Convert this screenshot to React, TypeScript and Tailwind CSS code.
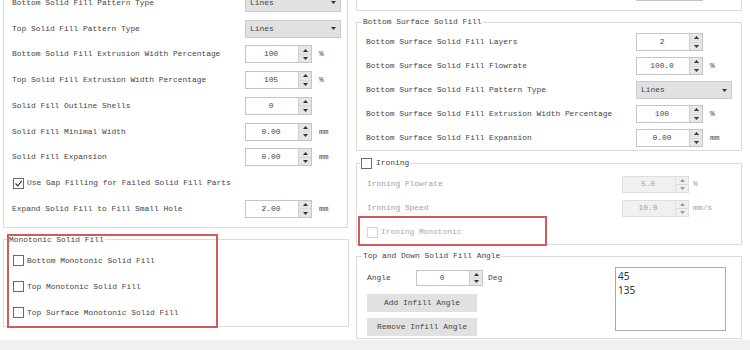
const mono = "[font-family:'Liberation_Mono','Courier_New',monospace] text-[7.9px] leading-[12px]";

const Arrows = ({ disabled }: { disabled?: boolean }) => (
  <div
    className={`flex w-[13px] flex-col border-l ${
      disabled ? 'border-[#e2e2e2] bg-[#f0f0f0]' : 'border-[#cfcfcf] bg-[#e6e6e6]'
    }`}
  >
    <div className="flex flex-1 items-center justify-center border-b border-[#d8d8d8]">
      <svg width="5" height="3" viewBox="0 0 5 3">
        <path d="M0 3 L2.5 0 L5 3 Z" fill={disabled ? '#9a9a9a' : '#333'} />
      </svg>
    </div>
    <div className="flex flex-1 items-center justify-center">
      <svg width="5" height="3" viewBox="0 0 5 3">
        <path d="M0 0 L2.5 3 L5 0 Z" fill={disabled ? '#9a9a9a' : '#333'} />
      </svg>
    </div>
  </div>
);

const Spin = ({ value, disabled, h = 'h-[18px]' }: { value: string; disabled?: boolean; h?: string }) => (
  <div
    className={`flex ${h} w-[67px] border ${
      disabled ? 'border-[#dedede] bg-[#f0f0f0] text-[#a0a0a0]' : 'border-[#c4c4c4] bg-white text-[#444]'
    }`}
  >
    <span className="flex flex-1 items-center justify-center pr-[2px]">{value}</span>
    <Arrows disabled={disabled} />
  </div>
);

const Select = () => (
  <div className="flex h-[18px] w-[96px] items-center justify-between border border-[#cacaca] bg-[#e1e1e1] pl-[4px] pr-[4px] text-[#444]">
    <span>Lines</span>
    <svg width="5" height="3" viewBox="0 0 5 3">
      <path d="M0 0 L2.5 3 L5 0 Z" fill="#333" />
    </svg>
  </div>
);

const Check = ({ checked, disabled }: { checked?: boolean; disabled?: boolean }) => (
  <span
    className={`flex h-[11px] w-[11px] shrink-0 items-center justify-center border bg-white ${
      disabled ? 'border-[#d4d4d4]' : 'border-[#6a6a6a]'
    }`}
  >
    {checked && (
      <svg width="9" height="9" viewBox="0 0 9 9">
        <path d="M1.5 4.5 L3.7 6.8 L7.8 1.8" fill="none" stroke="#333" strokeWidth="1.1" />
      </svg>
    )}
  </span>
);

const Row = ({
  label,
  labelW,
  control,
  unit,
  h,
  disabled,
}: {
  label: string;
  labelW: string;
  control?: React.ReactNode;
  unit?: string;
  h: string;
  disabled?: boolean;
}) => (
  <div className={`flex ${h} items-center`}>
    <span className={`${labelW} shrink-0 ${disabled ? 'text-[#a0a0a0]' : 'text-[#444]'}`}>{label}</span>
    {control}
    {unit && <span className={`${disabled ? 'ml-[4px] text-[#a0a0a0]' : 'ml-[7px] text-[#444]'}`}>{unit}</span>}
  </div>
);

const CheckRow = ({ label, checked, disabled, h }: { label: string; checked?: boolean; disabled?: boolean; h: string }) => (
  <div className={`flex ${h} items-center gap-[3px]`}>
    <Check checked={checked} disabled={disabled} />
    <span className={disabled ? 'text-[#a8a8a8]' : 'text-[#444]'}>{label}</span>
  </div>
);

const Legend = ({ children, ml }: { children: React.ReactNode; ml: string }) => (
  <legend className={`${ml} px-[1px] text-[#444]`}>{children}</legend>
);

export default function App() {
  const lw = 'w-[233px]';
  const rh = 'h-[25.75px]';
  return (
    <div className={`flex h-[350px] w-[750px] flex-col overflow-hidden bg-white ${mono}`}>
      <div className="flex h-[340px]">
        {/* left column */}
        <div className="flex w-[356px] flex-col pl-[3px]">
          <div className="-mt-[10px] w-[345px] border-x border-b border-[#dcdcdc] pb-[5px] pl-[8px]">
            <Row h={rh} labelW={lw} label="Bottom Solid Fill Pattern Type" control={<Select />} />
            <Row h={rh} labelW={lw} label="Top Solid Fill Pattern Type" control={<Select />} />
            <Row h={rh} labelW={lw} label="Bottom Solid Fill Extrusion Width Percentage" control={<Spin value="100" />} unit="%" />
            <Row h={rh} labelW={lw} label="Top Solid Fill Extrusion Width Percentage" control={<Spin value="105" />} unit="%" />
            <Row h={rh} labelW={lw} label="Solid Fill Outline Shells" control={<Spin value="0" />} />
            <Row h={rh} labelW={lw} label="Solid Fill Minimal Width" control={<Spin value="0.00" />} unit="mm" />
            <Row h={rh} labelW={lw} label="Solid Fill Expansion" control={<Spin value="0.00" />} unit="mm" />
            <div className="pl-[1px]">
              <CheckRow h={rh} checked label="Use Gap Filling for Failed Solid Fill Parts" />
            </div>
            <Row h={rh} labelW={lw} label="Expand Solid Fill to Fill Small Hole" control={<Spin value="2.00" />} unit="mm" />
          </div>

          <div className="relative mt-[6px] w-[346px]">
            <fieldset className="border border-[#dcdcdc]">
              <Legend ml="ml-[4px]">Monotonic Solid Fill</Legend>
              <div className="pl-[9px] pt-[2px]">
                <CheckRow h="h-[26px]" label="Bottom Monotonic Solid Fill" />
                <CheckRow h="h-[26px]" label="Top Monotonic Solid Fill" />
                <CheckRow h="h-[26px]" label="Top Surface Monotonic Solid Fill" />
              </div>
            </fieldset>
            <div className="pointer-events-none absolute left-[4px] top-0 h-[94px] w-[211px] border-2 border-[#d45a5a]" />
          </div>
        </div>

        {/* right column */}
        <div className="flex w-[386px] flex-col">
          <div className="h-[11px] overflow-hidden border-x border-b border-[#dcdcdc]">
            <div className="-mt-[17px] ml-[279px]">
              <Spin value="" />
            </div>
          </div>

          <fieldset className="mt-[5px] border border-[#dcdcdc]">
            <Legend ml="ml-[5px]">Bottom Surface Solid Fill</Legend>
            <div className="pl-[9px] pt-[2px]">
              <Row h="h-[24px]" labelW="w-[270px]" label="Bottom Surface Solid Fill Layers" control={<Spin value="2" />} />
              <Row h="h-[24px]" labelW="w-[270px]" label="Bottom Surface Solid Fill Flowrate" control={<Spin value="100.0" />} unit="%" />
              <Row h="h-[24px]" labelW="w-[270px]" label="Bottom Surface Solid Fill Pattern Type" control={<Select />} />
              <Row h="h-[24px]" labelW="w-[270px]" label="Bottom Surface Solid Fill Extrusion Width Percentage" control={<Spin value="100" />} unit="%" />
              <Row h="h-[24px]" labelW="w-[270px]" label="Bottom Surface Solid Fill Expansion" control={<Spin value="0.00" />} unit="mm" />
            </div>
          </fieldset>

          <div className="relative mt-[6px]">
            <fieldset className="border border-[#dcdcdc]">
              <legend className="ml-[3px] flex items-center gap-[4px] px-[1px] text-[#444]">
                <Check />
                <span>Ironing</span>
              </legend>
              <div className="pl-[10px] pt-[3px]">
                <Row h="h-[24px]" labelW="w-[255px]" disabled label="Ironing Flowrate" control={<Spin disabled h="h-[17px]" value="5.0" />} unit="%" />
                <Row h="h-[24px]" labelW="w-[255px]" disabled label="Ironing Speed" control={<Spin disabled h="h-[17px]" value="10.0" />} unit="mm/s" />
                <CheckRow h="h-[24px]" disabled label="Ironing Monotonic" />
              </div>
            </fieldset>
            <div className="pointer-events-none absolute bottom-[-1px] left-[2px] h-[30px] w-[189px] border-2 border-[#d45a5a]" />
          </div>

          <fieldset className="mt-[5px] border border-[#dcdcdc]">
            <Legend ml="ml-[5px]">Top and Down Solid Fill Angle</Legend>
            <div className="flex w-full pb-[2px] pl-[10px]">
              <div className="flex flex-col pt-[8px]">
                <div className="flex h-[16px] items-center text-[#444]">
                  <span className="w-[49px]">Angle</span>
                  <Spin value="0" h="h-[16px]" />
                  <span className="ml-[5px]">Deg</span>
                </div>
                <button className="mt-[8px] h-[18px] w-[110px] bg-[#e1e1e1] text-[#444]">Add Infill Angle</button>
                <button className="mt-[6px] h-[18px] w-[110px] bg-[#e1e1e1] text-[#444]">Remove Infill Angle</button>
              </div>
              <div className="ml-auto mr-[15px] mt-[5px] h-[64px] w-[111px] border border-[#ababab] bg-white px-[2px] pt-[1px] font-['Noto_Sans',sans-serif] text-[10px] leading-[14px] text-[#333]">
                <div>45</div>
                <div>135</div>
              </div>
            </div>
          </fieldset>
        </div>
      </div>
      <div className="h-[10px] bg-[#f0f0f0]" />
    </div>
  );
}
